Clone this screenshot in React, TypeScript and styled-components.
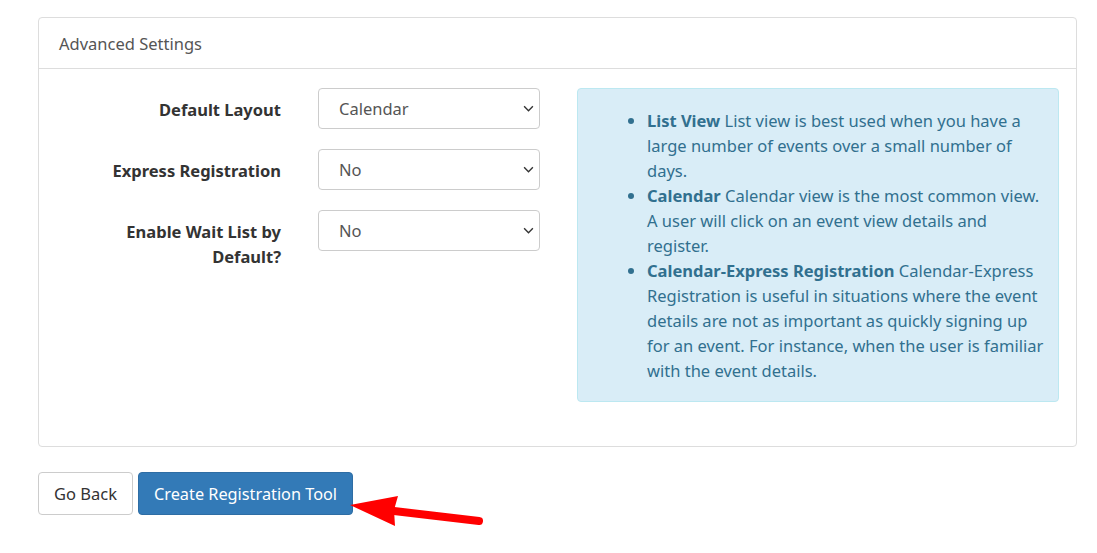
import styled, { createGlobalStyle } from "styled-components";

const GlobalStyle = createGlobalStyle`
  body {
    margin: 0;
    background: #fff;
    font-family: "Noto Sans", "Open Sans", sans-serif;
    color: #333;
  }
`;

const settings = [
  { label: "Default Layout", value: "Calendar", options: ["List View", "Calendar", "Calendar-Express Registration"] },
  { label: "Express Registration", value: "No", options: ["No", "Yes"] },
  { label: "Enable Wait List by Default?", value: "No", options: ["No", "Yes"] },
];

const layouts = [
  {
    name: "List View",
    text: "List view is best used when you have a large number of events over a small number of days.",
  },
  {
    name: "Calendar",
    text: "Calendar view is the most common view. A user will click on an event view details and register.",
  },
  {
    name: "Calendar-Express Registration",
    text: "Calendar-Express Registration is useful in situations where the event details are not as important as quickly signing up for an event. For instance, when the user is familiar with the event details.",
  },
];

export default function App() {
  return (
    <Page>
      <GlobalStyle />
      <Panel>
        <PanelHeading>Advanced Settings</PanelHeading>
        <PanelBody>
          <Form>
            {settings.map((setting) => (
              <FormRow key={setting.label}>
                <Label>{setting.label}</Label>
                <SelectWrap>
                  <Select defaultValue={setting.value}>
                    {setting.options.map((option) => (
                      <option key={option}>{option}</option>
                    ))}
                  </Select>
                  <Chevron viewBox="0 0 12 8">
                    <path d="M1 1.5 6 6.5l5-5" />
                  </Chevron>
                </SelectWrap>
              </FormRow>
            ))}
          </Form>

          <InfoBox>
            <InfoList>
              {layouts.map((layout) => (
                <li key={layout.name}>
                  <strong>{layout.name}</strong> {layout.text}
                </li>
              ))}
            </InfoList>
          </InfoBox>
        </PanelBody>
      </Panel>

      <Actions>
        <Button>Go Back</Button>
        <Button primary>Create Registration Tool</Button>
        {/* annotation arrow pointing at the create button */}
        <Arrow viewBox="0 0 140 40">
          <path d="M46 19 L131 29" />
          <polygon points="2,13 50,4 46,18 47,34" />
        </Arrow>
      </Actions>
    </Page>
  );
}

const Page = styled.div`
  padding: 17px 20px 40px 38px;
  width: 1039px;
`;

const Panel = styled.div`
  border: 1px solid #dddddd;
  border-radius: 4px;
  background: #fff;
`;

const PanelHeading = styled.div`
  height: 50px;
  display: flex;
  align-items: center;
  padding: 0 20px;
  border-bottom: 1px solid #dddddd;
  font-size: 16.5px;
  color: #555;
`;

const PanelBody = styled.div`
  display: grid;
  grid-template-columns: 500px 482px;
  gap: 18px;
  padding: 19px 18px 44px 20px;
`;

const Form = styled.div`
  display: flex;
  flex-direction: column;
  gap: 20px;
`;

const FormRow = styled.div`
  display: grid;
  grid-template-columns: 222px 222px;
  gap: 37px;
  align-items: start;
`;

const Label = styled.label`
  text-align: right;
  font-weight: 700;
  font-size: 16.5px;
  line-height: 25px;
  color: #333;
  padding-top: 9px;
`;

const SelectWrap = styled.div`
  position: relative;
  height: 41px;
`;

const Select = styled.select`
  appearance: none;
  width: 100%;
  height: 41px;
  padding: 0 30px 0 20px;
  border: 1px solid #cccccc;
  border-radius: 4px;
  background: #fff;
  font-family: inherit;
  font-size: 16.5px;
  color: #555;
`;

const Chevron = styled.svg`
  position: absolute;
  right: 6px;
  top: 17px;
  width: 11px;
  height: 7px;
  fill: none;
  stroke: #333;
  stroke-width: 1.6;
  pointer-events: none;
`;

const InfoBox = styled.div`
  background: #d9edf7;
  border: 1px solid #bce8f1;
  border-radius: 4px;
  color: #31708f;
  padding: 19px 8px 18px 30px;
`;

const InfoList = styled.ul`
  margin: 0;
  padding-left: 39px;
  font-size: 16.5px;
  line-height: 25px;

  strong {
    font-weight: 700;
  }
`;

const Actions = styled.div`
  position: relative;
  display: flex;
  align-items: center;
  gap: 5px;
  margin-top: 25px;
`;

const Button = styled.button<{ primary?: boolean }>`
  height: 43px;
  padding: 0 15px;
  border-radius: 4px;
  border: 1px solid ${(p) => (p.primary ? "#2e6da4" : "#cccccc")};
  background: ${(p) => (p.primary ? "#337ab7" : "#fff")};
  color: ${(p) => (p.primary ? "#fff" : "#333")};
  font-family: inherit;
  font-size: ${(p) => (p.primary ? "16.3px" : "16.5px")};
`;

const Arrow = styled.svg`
  position: absolute;
  left: 310px;
  top: 20px;
  width: 140px;
  height: 40px;
  overflow: visible;

  path {
    stroke: #ff0000;
    stroke-width: 8;
    stroke-linecap: round;
    fill: none;
  }

  polygon {
    fill: #ff0000;
  }
`;
